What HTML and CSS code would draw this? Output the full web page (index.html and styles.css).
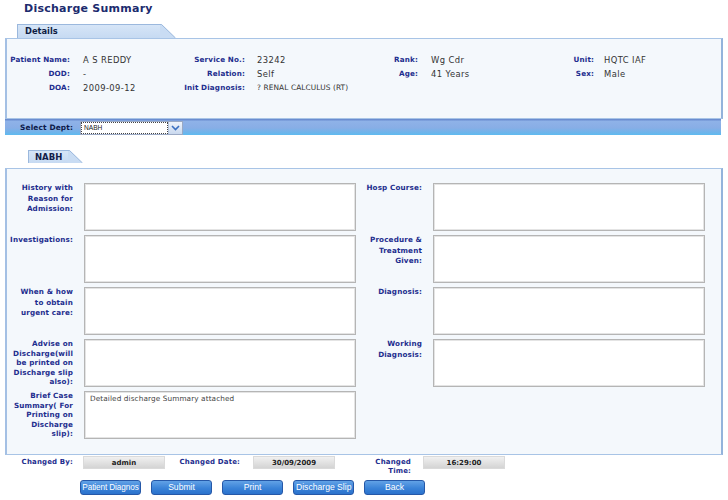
FILE: index.html
```html
<!DOCTYPE html>
<html>
<head>
<meta charset="utf-8">
<title>Discharge Summary</title>
<link rel="stylesheet" href="styles.css">
</head>
<body>
<div class="page">
  <h1 class="title">Discharge Summary</h1>

  <div class="tab tab-details">
    <span class="tab-label">Details</span>
    <svg class="tab-slant" width="16" height="14" viewBox="0 0 16 14"><path d="M0 0 L1.5 0 L15.5 14 L0 14 Z" fill="#c9dcf3"/><path d="M0 0.5 L1.5 0.5 L15.5 14" fill="none" stroke="#9bb8dd"/></svg>
  </div>
  <section class="panel details">
    <div class="dgrid">
      <span class="lbl">Patient Name:</span><span class="val">A S REDDY</span>
      <span class="lbl">Service No.:</span><span class="val">23242</span>
      <span class="lbl">Rank:</span><span class="val">Wg Cdr</span>
      <span class="lbl">Unit:</span><span class="val">HQTC IAF</span>

      <span class="lbl">DOD:</span><span class="val">-</span>
      <span class="lbl">Relation:</span><span class="val">Self</span>
      <span class="lbl">Age:</span><span class="val">41 Years</span>
      <span class="lbl">Sex:</span><span class="val">Male</span>

      <span class="lbl">DOA:</span><span class="val">2009-09-12</span>
      <span class="lbl">Init Diagnosis:</span><span class="val small">? RENAL CALCULUS (RT)</span>
    </div>
  </section>

  <div class="deptbar">
    <span class="lbl dept-lbl">Select Dept:</span>
    <div class="select">
      <span class="select-text">NABH</span>
      <span class="select-btn"><svg width="9" height="6" viewBox="0 0 9 6"><path d="M1 1 L4.5 4.5 L8 1" fill="none" stroke="#3a6fc0" stroke-width="1.6"/></svg></span>
    </div>
  </div>

  <div class="tab tab-nabh">
    <span class="tab-label">NABH</span>
    <svg class="tab-slant" width="16" height="13" viewBox="0 0 16 13"><path d="M0 0 L1.5 0 L14.5 13 L0 13 Z" fill="#c9dcf3"/><path d="M0 0.5 L1.5 0.5 L14.5 13" fill="none" stroke="#9bb8dd"/></svg>
  </div>
  <section class="panel form">
    <div class="fgrid">
      <label class="flbl">History with<br>Reason for<br>Admission:</label>
      <div class="ta"></div>
      <label class="flbl">Hosp Course:</label>
      <div class="ta"></div>

      <label class="flbl">Investigations:</label>
      <div class="ta"></div>
      <label class="flbl">Procedure &amp;<br>Treatment<br>Given:</label>
      <div class="ta"></div>

      <label class="flbl">When &amp; how<br>to obtain<br>urgent care:</label>
      <div class="ta"></div>
      <label class="flbl">Diagnosis:</label>
      <div class="ta"></div>

      <label class="flbl tight">Advise on<br>Discharge(will<br>be printed on<br>Discharge slip<br>also):</label>
      <div class="ta"></div>
      <label class="flbl">Working<br>Diagnosis:</label>
      <div class="ta"></div>

      <label class="flbl tight">Brief Case<br>Summary( For<br>Printing on<br>Discharge<br>slip):</label>
      <div class="ta"><span class="ta-text">Detailed discharge Summary attached</span></div>
    </div>
  </section>

  <div class="meta">
    <span class="lbl mlbl">Changed By:</span><span class="mbox">admin</span>
    <span class="lbl mlbl">Changed Date:</span><span class="mbox">30/09/2009</span>
    <span class="lbl mlbl">Changed<br>Time:</span><span class="mbox">16:29:00</span>
  </div>

  <div class="actions">
    <button class="btn btn-first">Patient Diagnos</button>
    <button class="btn">Submit</button>
    <button class="btn">Print</button>
    <button class="btn">Discharge Slip</button>
    <button class="btn">Back</button>
  </div>
</div>
</body>
</html>
```

FILE: styles.css
```css
* { box-sizing: border-box; }
html, body { margin: 0; padding: 0; background: #ffffff; }
body { font-family: "DejaVu Sans", Verdana, sans-serif; color: #333; }

.page { width: 728px; padding: 0 5px; }

.title {
  margin: 0;
  padding: 2px 0 0 19px;
  height: 24px;
  font-size: 11px;
  line-height: 14px;
  font-weight: bold;
  color: #1c2b6e;
  letter-spacing: 0.25px;
}

/* tabs */
.tab { display: flex; align-items: stretch; }
.tab-label {
  display: block;
  background: linear-gradient(#d6e5f7, #c6daf2);
  border-top: 1px solid #9bb8dd;
  border-left: 1px solid #9bb8dd;
  font-weight: bold;
  color: #0f1d44;
}
.tab-slant { display: block; }
.tab-details { margin-left: 12px; height: 14px; }
.tab-details .tab-label { width: 143px; padding-left: 7px; font-size: 8.3px; line-height: 13px; }
.tab-nabh { margin: 15px 0 0 23px; height: 13px; }
.tab-nabh .tab-label { width: 40px; padding-left: 6px; font-size: 8.5px; line-height: 13px; color: #13204a; }

/* panels */
.panel {
  background: #f4f8fc;
  border: 1px solid #a8c4e6;
  border-left: 2px solid #a4c0e4;
  border-right: 2px solid #93b3db;
}

.lbl {
  font-size: 7.2px;
  font-weight: bold;
  color: #1d2d8e;
  letter-spacing: 0.15px;
}

.details { height: 81px; padding-top: 13px; }
.dgrid {
  display: grid;
  grid-template-columns: 65px 110px 65px 110px 63px 111px 65px 1fr;
  grid-auto-rows: 14px;
  align-items: center;
}
.dgrid .lbl { text-align: right; padding-right: 2px; }
.dgrid .val { font-size: 8.4px; letter-spacing: 0.4px; color: #333; padding-left: 11px; padding-top: 1px; }
.dgrid .val:nth-child(4n) { padding-left: 10px; }
.dgrid .val:nth-child(8n) { padding-left: 8px; }
.dgrid .val.small { font-size: 7.4px; letter-spacing: 0.1px; }

/* dept bar */
.deptbar {
  margin-right: 2px;
  height: 16px;
  display: flex;
  align-items: center;
  background: linear-gradient(#6a8dd0 0, #6a8dd0 1px, #8fb2e8 2px, #88aee6 55%, #72b3ea 80%, #5ebbf0 100%);
}
.dept-lbl { width: 75px; padding-left: 15px; color: #0e1a4a; font-size: 7.4px; }
.select {
  display: flex;
  height: 14px;
  margin-top: 2px;
  width: 103px;
  background: #fff;
  border: 1px solid #9aa9c4;
}
.select-text {
  flex: 1;
  font-size: 6.6px;
  line-height: 10px;
  color: #222;
  padding-left: 2px;
  margin: 1px;
  outline: 1px dotted #444;
  font-family: "Liberation Sans", Arial, sans-serif;
}
.select-btn {
  width: 14px;
  display: flex;
  align-items: center;
  justify-content: center;
  background: linear-gradient(#eef3fb, #c9d8ee);
  border-left: 1px solid #b4c4de;
}

/* form */
.form { margin-top: 5px; height: 287px; padding-top: 14px; }
.fgrid {
  display: grid;
  grid-template-columns: 77px 272px 77px 272px;
  grid-auto-rows: 48px;
  row-gap: 4px;
}
.flbl {
  font-size: 7.2px;
  font-weight: bold;
  color: #1d2d8e;
  letter-spacing: 0.15px;
  line-height: 10.7px;
  text-align: right;
  padding-right: 11px;
  padding-top: 0;
}
.flbl.tight { line-height: 9.6px; }
.ta {
  background: #fff;
  border: 1px solid #b5b5b5;
  box-shadow: inset 0 0 0 1px #e4e4e4;
  padding: 2px 5px;
  font-size: 7.3px;
  line-height: 10px;
}
.ta-text {
  font-size: 7.3px;
  color: #444;
  letter-spacing: 0.1px;
}

/* meta row */
.meta {
  display: grid;
  grid-template-columns: 78px 82px 88px 82px 88px 82px;
  align-items: start;
  height: 21px;
  padding-top: 1px;
}
.mlbl { text-align: right; padding-right: 10px; line-height: 9px; padding-top: 2px; font-size: 7px; }
.mlbl:nth-child(3) { padding-right: 13px; }
.mlbl:nth-child(5) { padding-right: 12px; }
.mbox {
  height: 13px;
  background: linear-gradient(#f0f0f0, #d4d4d4);
  border: 1px solid #dadada;
  text-align: center;
  font-size: 7px;
  line-height: 12px;
  font-weight: bold;
  color: #222;
}

/* actions */
.actions {
  display: flex;
  gap: 10px;
  padding-left: 75px;
  margin-top: 4px;
}
.btn {
  width: 61px;
  height: 15px;
  padding: 0 2px;
  margin: 0;
  border: 1px solid #2558a8;
  border-radius: 3px;
  background: linear-gradient(#62a2e6, #3a83d8 55%, #2b72cc);
  color: #fff;
  font-family: "Liberation Sans", Arial, sans-serif;
  font-size: 8.6px;
  line-height: 13px;
  white-space: nowrap;
  overflow: hidden;
  text-align: center;
}
.btn-first { padding: 0 1px; font-size: 8.2px; letter-spacing: -0.1px; }
```
